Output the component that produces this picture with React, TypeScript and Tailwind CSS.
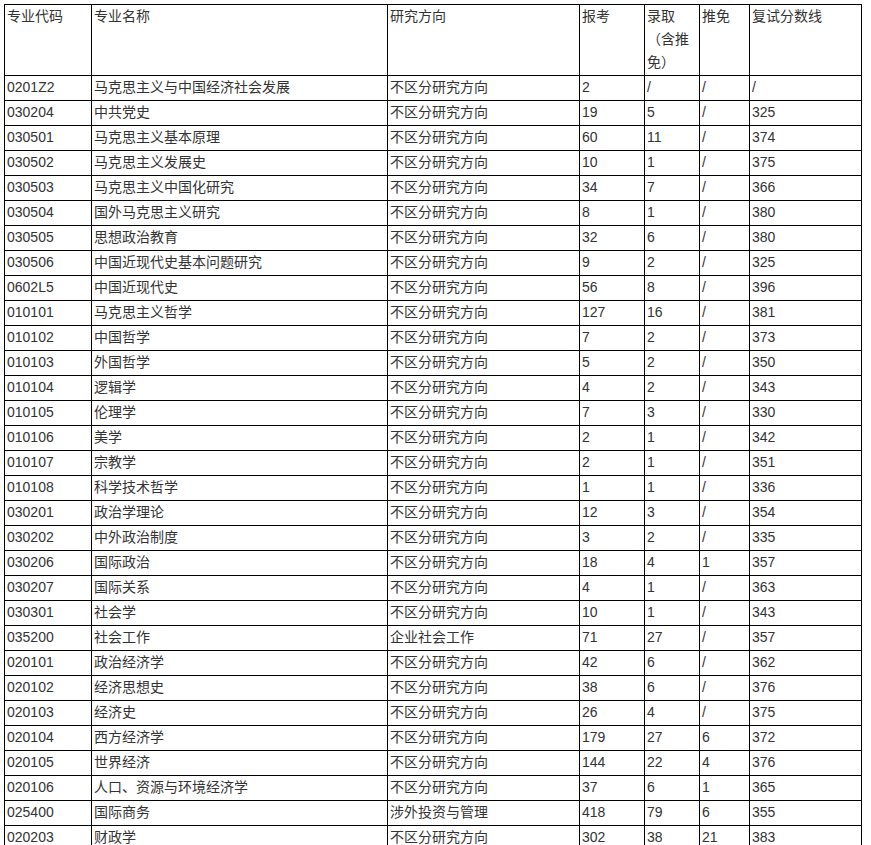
const ROWS: string[][] = [
  ["0201Z2", "马克思主义与中国经济社会发展", "不区分研究方向", "2", "/", "/", "/"],
  ["030204", "中共党史", "不区分研究方向", "19", "5", "/", "325"],
  ["030501", "马克思主义基本原理", "不区分研究方向", "60", "11", "/", "374"],
  ["030502", "马克思主义发展史", "不区分研究方向", "10", "1", "/", "375"],
  ["030503", "马克思主义中国化研究", "不区分研究方向", "34", "7", "/", "366"],
  ["030504", "国外马克思主义研究", "不区分研究方向", "8", "1", "/", "380"],
  ["030505", "思想政治教育", "不区分研究方向", "32", "6", "/", "380"],
  ["030506", "中国近现代史基本问题研究", "不区分研究方向", "9", "2", "/", "325"],
  ["0602L5", "中国近现代史", "不区分研究方向", "56", "8", "/", "396"],
  ["010101", "马克思主义哲学", "不区分研究方向", "127", "16", "/", "381"],
  ["010102", "中国哲学", "不区分研究方向", "7", "2", "/", "373"],
  ["010103", "外国哲学", "不区分研究方向", "5", "2", "/", "350"],
  ["010104", "逻辑学", "不区分研究方向", "4", "2", "/", "343"],
  ["010105", "伦理学", "不区分研究方向", "7", "3", "/", "330"],
  ["010106", "美学", "不区分研究方向", "2", "1", "/", "342"],
  ["010107", "宗教学", "不区分研究方向", "2", "1", "/", "351"],
  ["010108", "科学技术哲学", "不区分研究方向", "1", "1", "/", "336"],
  ["030201", "政治学理论", "不区分研究方向", "12", "3", "/", "354"],
  ["030202", "中外政治制度", "不区分研究方向", "3", "2", "/", "335"],
  ["030206", "国际政治", "不区分研究方向", "18", "4", "1", "357"],
  ["030207", "国际关系", "不区分研究方向", "4", "1", "/", "363"],
  ["030301", "社会学", "不区分研究方向", "10", "1", "/", "343"],
  ["035200", "社会工作", "企业社会工作", "71", "27", "/", "357"],
  ["020101", "政治经济学", "不区分研究方向", "42", "6", "/", "362"],
  ["020102", "经济思想史", "不区分研究方向", "38", "6", "/", "376"],
  ["020103", "经济史", "不区分研究方向", "26", "4", "/", "375"],
  ["020104", "西方经济学", "不区分研究方向", "179", "27", "6", "372"],
  ["020105", "世界经济", "不区分研究方向", "144", "22", "4", "376"],
  ["020106", "人口、资源与环境经济学", "不区分研究方向", "37", "6", "1", "365"],
  ["025400", "国际商务", "涉外投资与管理", "418", "79", "6", "355"],
  ["020203", "财政学", "不区分研究方向", "302", "38", "21", "383"],
];

const cell = "border border-black pl-[2px] pr-px pt-0 pb-px align-top text-left font-normal";

export default function App() {
  return (
    <div className="h-[845px] overflow-hidden bg-white pl-[4px] pt-[4px] font-['Liberation_Sans','Noto_Sans_CJK_SC',sans-serif] text-[14px] leading-[23px] text-[#333]">
      <table className="w-[857px] table-fixed border-collapse">
        <colgroup>
          <col className="w-[87px]" />
          <col className="w-[296px]" />
          <col className="w-[192px]" />
          <col className="w-[65px]" />
          <col className="w-[55px]" />
          <col className="w-[50px]" />
          <col className="w-[112px]" />
        </colgroup>
        <thead>
          <tr>
            <th className={cell}>专业代码</th>
            <th className={cell}>专业名称</th>
            <th className={cell}>研究方向</th>
            <th className={cell}>报考</th>
            <th className={cell}>
              录取
              <br />
              （含推免）
            </th>
            <th className={cell}>推免</th>
            <th className={cell}>复试分数线</th>
          </tr>
        </thead>
        <tbody>
          {ROWS.map((r) => (
            <tr key={r[0]}>
              {r.map((v, i) => (
                <td key={i} className={cell + " whitespace-nowrap"}>
                  {v}
                </td>
              ))}
            </tr>
          ))}
        </tbody>
      </table>
    </div>
  );
}
